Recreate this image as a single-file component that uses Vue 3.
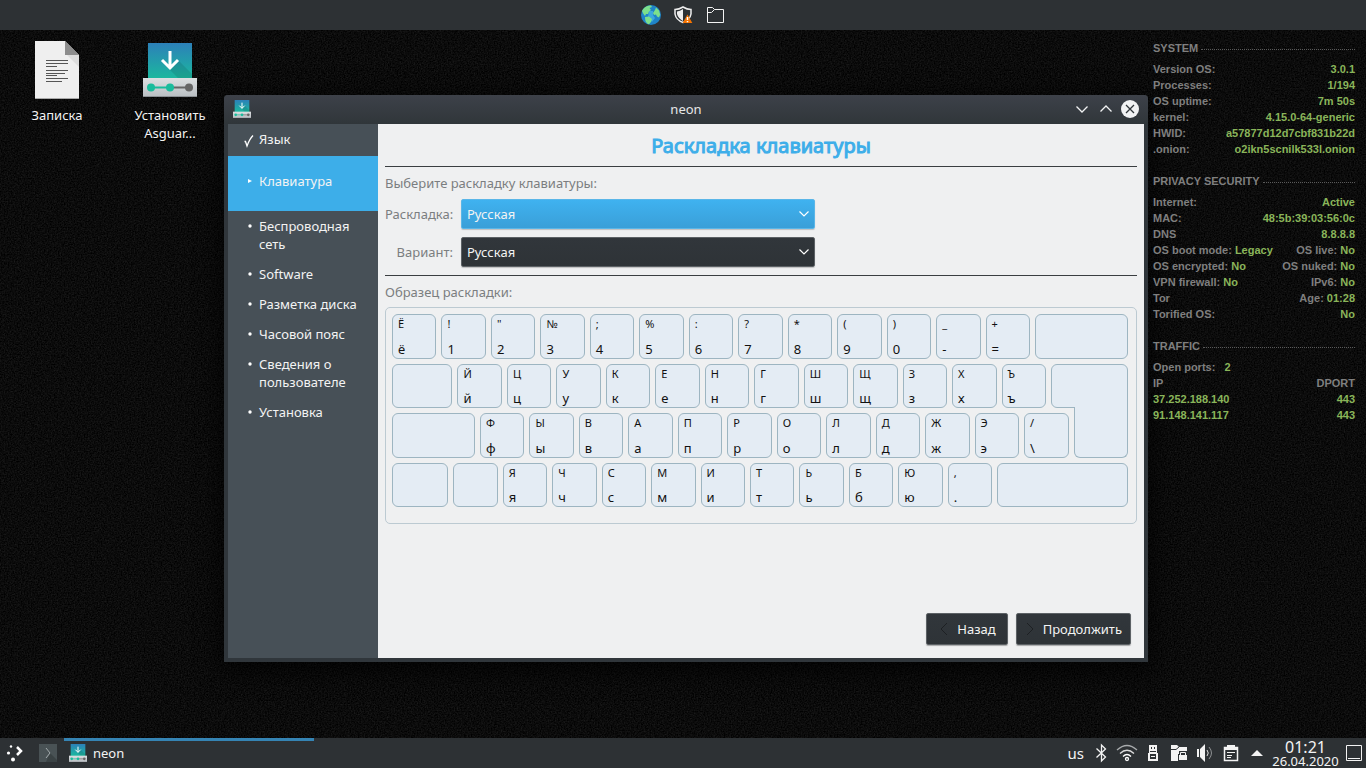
<script setup>
import { ref } from 'vue'

const layout = ref('Русская')
const variant = ref('Русская')

const steps = [
  { text: 'Язык', state: 'done' },
  { text: 'Клавиатура', state: 'current' },
  { text: 'Беспроводная сеть' },
  { text: 'Software' },
  { text: 'Разметка диска' },
  { text: 'Часовой пояс' },
  { text: 'Сведения о пользователе' },
  { text: 'Установка' },
]

const blank = (w, kind = '') => ({ w, kind })
const keys = (top, bottom) => [...top].map((t, i) => ({ w: 445, top: t, bottom: bottom[i] }))

const rows = [
  [...keys('Ё!"№;%:?*()_+', 'ё1234567890-='), blank(930)],
  [blank(605), ...keys('ЙЦУКЕНГШЩЗХЪ', 'йцукенгшщзхъ'), blank(770, 'enter-top')],
  [blank(830), ...keys('ФЫВАПРОЛДЖЭ/', 'фывапролджэ\\'), blank(545, 'enter-bottom')],
  [blank(565), blank(445), ...keys('ЯЧСМИТЬБЮ,', 'ячсмитьбю.'), blank(1310)],
]
const columns = (row) => row.map((k) => `minmax(0, ${k.w}fr)`).join(' ')

const sections = [
  {
    title: 'SYSTEM',
    rows: [
      [['Version OS:'], ['', '3.0.1']],
      [['Processes:'], ['', '1/194']],
      [['OS uptime:'], ['', '7m 50s']],
      [['kernel:'], ['', '4.15.0-64-generic']],
      [['HWID:'], ['', 'a57877d12d7cbf831b22d']],
      [['.onion:'], ['', 'o2ikn5scnilk533l.onion']],
    ],
  },
  {
    title: 'PRIVACY SECURITY',
    rows: [
      [['Internet:'], ['', 'Active']],
      [['MAC:'], ['', '48:5b:39:03:56:0c']],
      [['DNS'], ['', '8.8.8.8']],
      [['OS boot mode:', 'Legacy'], ['OS live:', 'No']],
      [['OS encrypted:', 'No'], ['OS nuked:', 'No']],
      [['VPN firewall:', 'No'], ['IPv6:', 'No']],
      [['Tor'], ['Age:', '01:28']],
      [['Torified OS:'], ['', 'No']],
    ],
  },
  {
    title: 'TRAFFIC',
    rows: [
      [['Open ports:', '\u00a0\u00a02'], ['']],
      [['IP'], ['DPORT']],
      [['', '37.252.188.140'], ['', '443']],
      [['', '91.148.141.117'], ['', '443']],
    ],
  },
]
</script>

<template>
  <div class="desktop">
    <svg class="grain" aria-hidden="true">
      <filter id="grain" x="0" y="0" width="100%" height="100%" color-interpolation-filters="sRGB">
        <feTurbulence type="fractalNoise" baseFrequency="0.7" numOctaves="2" seed="4" />
        <feColorMatrix values="0.16 0 0 0 -0.035  0.16 0 0 0 -0.035  0.16 0 0 0 -0.035  0 0 0 0 1" />
      </filter>
      <rect width="100%" height="100%" filter="url(#grain)" />
      <symbol id="installer" viewBox="0 0 54 54">
        <linearGradient id="teal" x1="0" y1="0" x2="0" y2="1">
          <stop offset="0" stop-color="#2c80b9" /><stop offset="1" stop-color="#1abc9c" />
        </linearGradient>
        <linearGradient id="plate" x1="0" y1="0" x2="0" y2="1">
          <stop offset="0" stop-color="#dcdfe1" /><stop offset="1" stop-color="#b9bec2" />
        </linearGradient>
        <path fill="url(#teal)" d="M5 0h44v38H5z" />
        <path fill="#000" opacity=".1" d="M27 27l9-9 13 13v4H35z" />
        <path fill="none" stroke="#fff" stroke-width="3" d="M27 8v17M19 17l8 8 8-8" />
        <path fill="url(#plate)" d="M0 35h54v19H0z" />
        <path fill="#8b9094" d="M0 53h54v1H0z" />
        <path stroke="#666" stroke-width="2" d="M27 44.500h18" />
        <path stroke="#1abc9c" stroke-width="2" d="M9 44.500h18" />
        <circle cx="8" cy="44.500" r="4" fill="#1abc9c" /><circle cx="27" cy="44.500" r="4" fill="#1abc9c" />
        <circle cx="46" cy="44.500" r="4" fill="#666" />
      </symbol>
    </svg>

    <header class="topbar">
      <button aria-label="Браузер">
        <svg width="20" height="20" viewBox="0 0 20 20">
          <circle cx="10" cy="10" r="10" fill="#1f84c8" />
          <path fill="#48b8e8" opacity=".7" d="M8 6l4 0 0 4 2 3-3 4-4-5z" />
          <path fill="#7ce08c" d="M1 6c2-4 5-5.500 9-5.500L11 2 8.500 3 10 5 8 6.500 7 9 5 9 4 11 2.500 9zM4 12l4-.5 3 2.500-1 3-2 2.300C5 18.500 4 15.500 4 12zM12 8l2-3 1-2.500 3 3 1.200 4-1.200 3-2-1-1-2-2 .5z" />
        </svg>
      </button>
      <button aria-label="Безопасность">
        <svg width="20" height="20" viewBox="0 0 20 20">
          <path fill="none" stroke="#eee" stroke-width="1.500" d="M2 4.500Q6 4.500 10 2q4 2.500 8 2.500V9q-1 6-8 8.500Q3 15 2 9z" />
          <path fill="#eee" d="M4 6.500Q7 6 10 4v12Q5 13 4 9z" />
          <path fill="#f67400" d="M14.500 9.500l4.800 8.500H9.700z" /><path stroke="#fff" stroke-width="1.500" d="M14.500 12v3m0 1v1.200" />
        </svg>
      </button>
      <button aria-label="Файлы">
        <svg width="20" height="20" viewBox="0 0 20 20">
          <path fill="none" stroke="#f3f3f3" d="M2.500 2.500h5l2 2h9v13h-16zM2.500 7.500h4l3-3" />
        </svg>
      </button>
    </header>

    <main class="workspace">
      <nav class="shortcuts">
        <button>
          <svg width="44" height="58" viewBox="0 0 44 58">
            <path fill="#efefef" d="M0 0h30l14 14v44H0z" /><path fill="#ddd" d="M32 14h12v12z" />
            <path fill="#8d8d8d" d="M30 0l14 14H30z" /><path fill="#aaa" d="M0 57h44v1H0z" />
            <path stroke="#555" d="M11 19.500h22M11 22.500h22M11 25.500h11M11 29.500h22M11 32.500h19M11 34.500h11M11 37.500h22M11 40.500h16" />
          </svg>
          <span>Записка</span>
        </button>
        <button>
          <svg class="inst" width="54" height="54"><use href="#installer" /></svg>
          <span>Установить Asguar...</span>
        </button>
      </nav>

      <section class="window" aria-label="neon">
        <header class="titlebar">
          <svg width="18" height="18"><use href="#installer" /></svg>
          <span class="caption">neon</span>
          <div class="controls">
            <button aria-label="Свернуть"><svg width="18" height="18" viewBox="0 0 18 18"><path d="M3.500 6.500L9 12l5.500-5.500" /></svg></button>
            <button aria-label="Развернуть"><svg width="18" height="18" viewBox="0 0 18 18"><path d="M3.500 11.500L9 6l5.500 5.500" /></svg></button>
            <button aria-label="Закрыть"><svg width="18" height="18" viewBox="0 0 18 18"><circle cx="9" cy="9" r="9" fill="#f1f2f3" /><path class="dark" d="M5 5l8 8M13 5l-8 8" /></svg></button>
          </div>
        </header>

        <div class="body">
          <ol class="steps">
            <li v-for="s in steps" :key="s.text" :class="s.state">
              <svg v-if="s.state === 'done'" class="mark" width="12" height="14" viewBox="0 0 12 14"><path fill="none" stroke="#fff" stroke-width="1.300" d="M1.500 7.500h1l1.500 4.500Q6.500 5 10 1.500" /></svg>
              <svg v-else-if="s.state === 'current'" class="mark" width="12" height="14" viewBox="0 0 12 14"><path fill="#fff" d="M5 5l4 2-4 2z" /></svg>
              <svg v-else class="mark" width="12" height="14" viewBox="0 0 12 14"><circle cx="7" cy="7" r="1.700" fill="#fff" /></svg>
              <span>{{ s.text }}</span>
            </li>
          </ol>

          <div class="page">
            <h1>Раскладка клавиатуры</h1>
            <div class="form">
              <p>Выберите раскладку клавиатуры:</p>
              <div class="fields">
                <label for="layout">Раскладка:</label>
                <div class="combo active">
                  <select id="layout" v-model="layout"><option>Русская</option></select>
                  <svg width="12" height="8" viewBox="0 0 12 8"><path d="M1.500 1.500L6 6l4.500-4.500" /></svg>
                </div>
                <label for="variant">Вариант:</label>
                <div class="combo">
                  <select id="variant" v-model="variant"><option>Русская</option></select>
                  <svg width="12" height="8" viewBox="0 0 12 8"><path d="M1.500 1.500L6 6l4.500-4.500" /></svg>
                </div>
              </div>
            </div>
            <p class="sample">Образец раскладки:</p>
            <div class="keyboard">
              <div v-for="(row, r) in rows" :key="r" class="row" :style="{ gridTemplateColumns: columns(row) }">
                <div v-for="(k, i) in row" :key="i" class="key" :class="k.kind">
                  <span class="up">{{ k.top }}</span><span>{{ k.bottom }}</span>
                </div>
              </div>
            </div>
            <footer class="actions">
              <button><svg width="10" height="14" viewBox="0 0 10 14"><path d="M8 1L2 7l6 6" /></svg>Назад</button>
              <button class="next"><svg width="10" height="14" viewBox="0 0 10 14"><path d="M2 1l6 6-6 6" /></svg>Продолжить</button>
            </footer>
          </div>
        </div>
      </section>

      <aside class="monitor">
        <section v-for="s in sections" :key="s.title">
          <h2>{{ s.title }}</h2>
          <div v-for="(line, i) in s.rows" :key="i" class="stat">
            <span v-for="(part, j) in line" :key="j">{{ part[0] }} <b v-if="part[1]">{{ part[1] }}</b></span>
          </div>
        </section>
      </aside>
    </main>

    <footer class="taskbar">
      <button class="launcher" aria-label="Меню">
        <svg width="18" height="18" viewBox="0 0 18 18">
          <g fill="#fff"><circle cx="5" cy="2.500" r="1.200" /><circle cx="2.500" cy="9" r="1.600" /><circle cx="7" cy="15.500" r="2" /></g>
          <path fill="none" stroke="#fff" stroke-width="2.500" d="M11 3l4 4-4 4" />
        </svg>
      </button>
      <button class="konsole" aria-label="Терминал">
        <svg width="18" height="18" viewBox="0 0 18 18"><path fill="#495255" d="M0 0h18v18H0z" /><path fill="#3a4244" d="M11 9l7 7v2H7z" /><path fill="none" stroke="#a3abad" d="M7 4l4 5-4 5" /></svg>
      </button>
      <button class="task">
        <svg width="18" height="18"><use href="#installer" /></svg>neon
      </button>
      <div class="tray">
        <span class="lang">us</span>
        <svg viewBox="0 0 22 22"><path class="line" stroke-width="1.300" d="M6.500 6.500l9 8.500-4 4V3l4 4-9 8.500" /></svg>
        <svg viewBox="0 0 22 22">
          <g fill="none" stroke="#a8abad" stroke-width="1.300"><path d="M1 8Q11-1 21 8" /><path stroke="#ddd" d="M4 11.500q7-6.500 14 0" /><path stroke="#fff" d="M7 14.500q4-4 8 0" /><circle cx="11" cy="17" r="1.500" stroke="#fff" /></g>
        </svg>
        <svg viewBox="0 0 22 22"><path fill="#f3f3f3" fill-rule="evenodd" d="M7 3h8v8h1v8H6v-8h1zM9 5v2h1V5zm3 0v2h1V5zM8 9v1h6V9zM8 12v5h6v-5zM9 14h4v1H9z" /></svg>
        <svg viewBox="0 0 22 22"><path fill="#f3f3f3" d="M3 3h6l2 2h8v14H3z" /><path stroke="#2d3134" d="M3 7.500h5l3-2.500" fill="none" /><path fill="#2d3134" d="M10 12h1V9h8v3h1v7H10z" /><path fill="none" stroke="#f3f3f3" d="M12.500 13v-2.500h5V13" /><path fill="#f3f3f3" d="M11 13h8v5h-8z" /></svg>
        <svg viewBox="0 0 22 22"><path fill="#f3f3f3" d="M3 7h2v8H3zM6 7l5-5v18l-5-5z" /><path fill="none" stroke="#ddd" d="M13 8q2.500 3 0 6" /><path fill="none" stroke="#8d9092" d="M15 5q5 6 0 12" /></svg>
        <svg viewBox="0 0 22 22"><path class="line" stroke-width="1.500" d="M4.500 5.500h13v13h-13z" /><path fill="#f3f3f3" d="M7 3h8v5H4V5h3zM15 5h3v3h-3z" /><path class="line" d="M7 10.500h8M7 13.500h5M7 15.500h4" /></svg>
        <svg viewBox="0 0 22 22"><path fill="#f3f3f3" d="M5 14l6-6 6 6z" /></svg>
        <div class="clock"><time>01:21</time><time class="date">26.04.2020</time></div>
        <svg viewBox="0 0 22 22"><path class="line" d="M3.500 3.500h15v15h-15zM5 16.500h12" /></svg>
      </div>
    </footer>
  </div>
</template>

<style>
body { background: #0b0b0b; }
</style>

<style scoped>
* { box-sizing: border-box; margin: 0; }
.desktop {
  position: relative;
  display: flex;
  flex-direction: column;
  min-height: 100vh;
  overflow: hidden;
  font: 13px/18px "Noto Sans", sans-serif;
  color: #f3f3f3;
}
svg { display: block; flex: none; }
button {
  padding: 0;
  border: 0;
  background: none;
  color: inherit;
  font: inherit;
}
.grain { position: absolute; inset: 0; width: 100%; height: 100%; }
.topbar, .workspace, .taskbar { position: relative; }
.topbar {
  display: flex;
  align-items: center;
  justify-content: center;
  gap: 12px;
  height: 30px;
  background: #2d3134;
}
.workspace {
  display: grid;
  grid-template-columns: 224px minmax(0, 1fr) 218px;
  flex: 1;
}
.shortcuts { display: flex; align-items: flex-start; gap: 1px; padding: 11px 0 0 1px; }
.shortcuts button {
  display: flex;
  flex: none;
  flex-direction: column;
  align-items: center;
  gap: 7px;
  width: 112px;
  padding: 0 12px;
  text-shadow: 0 1px 2px #000;
}
.shortcuts svg { height: 58px; }
.shortcuts .inst { padding: 2px 0; }

.window {
  display: flex;
  flex-direction: column;
  margin: 65px 0 76px;
  border-radius: 4px 4px 0 0;
  background: #30363b;
  box-shadow: 0 6px 24px 4px rgba(0, 0, 0, 0.7);
}
.titlebar {
  display: grid;
  grid-template-columns: 66px 1fr 66px;
  align-items: center;
  height: 29px;
  padding: 0 9px 2px;
  border-radius: 4px 4px 0 0;
  background: linear-gradient(#3d4149, #30363a);
  color: #e6e7e8;
}
.caption { text-align: center; }
.controls { display: flex; justify-content: flex-end; gap: 6px; }
.controls path { fill: none; stroke: #f1f2f3; stroke-width: 1.3; }
.controls .dark { stroke: #30363a; }
.body {
  display: flex;
  flex: 1;
  margin: 0 4px 4px;
}
.steps {
  width: 150px;
  padding: 0;
  background: #475057;
  list-style: none;
}
.steps li { display: flex; gap: 4px; padding: 6px 16px 6px 15px; }
.steps .done { padding-bottom: 8px; }
.steps .current { padding-top: 16px; padding-bottom: 21px; background: #3daee9; }
.mark { margin-top: 2px; }
.done .mark { margin-top: 4px; }
.page {
  display: flex;
  flex: 1;
  flex-direction: column;
  padding: 0 7px 13px;
  background: #eff0f1;
  color: #7b7e80;
}
h1 {
  height: 42px;
  font-size: 20px;
  font-weight: 400;
  line-height: 44px;
  text-align: center;
  color: #3daee9;
  -webkit-text-stroke: 1px #3daee9;
}
.form {
  padding: 7px 0 8px;
  border: solid #3a3e41;
  border-width: 1px 0;
}
.fields {
  display: grid;
  grid-template-columns: 68px 354px;
  align-items: center;
  gap: 8px;
  margin-top: 7px;
}
.fields label { text-align: right; }
.combo { position: relative; }
.combo select {
  display: block;
  appearance: none;
  width: 100%;
  height: 30px;
  padding: 0 5px;
  border: 1px solid #5c6165;
  border-radius: 2px;
  background: linear-gradient(#31363b, #2e3337);
  box-shadow: 0 1px 1px rgba(0, 0, 0, 0.2);
  color: #f3f3f3;
  font: inherit;
}
.combo.active select {
  border-color: #5ab6e8;
  background: linear-gradient(#3fb2f0, #3a9fd8);
}
.combo svg { position: absolute; top: 11px; right: 5px; pointer-events: none; }
.combo path { fill: none; stroke: #fff; stroke-width: 1.2; }
.sample { margin: 7px 0 6px; }
.keyboard {
  display: flex;
  flex-direction: column;
  gap: 5px;
  height: 217px;
  padding: 6px 8px 16px 6px;
  border: 1px solid #bccad2;
  border-radius: 5px;
}
.row { display: grid; flex: 1; gap: 5px; }
.key {
  display: flex;
  flex-direction: column;
  justify-content: space-between;
  padding: 1px 5px;
  border: 1px solid #9db5c1;
  border-radius: 6px;
  background: #e4ecf4;
  color: #111;
  line-height: 16px;
}
.up { font-size: 11px; }
.enter-top { border-bottom-left-radius: 6px; border-bottom-right-radius: 0; }
.enter-bottom { position: relative; border-top: 0; border-radius: 0 0 6px 6px; }
.enter-bottom::before {
  content: "";
  position: absolute;
  right: -1px;
  bottom: 100%;
  left: -1px;
  height: 6px;
  border: solid #9db5c1;
  border-width: 0 1px;
  background: #e4ecf4;
}
.actions {
  display: flex;
  justify-content: flex-end;
  gap: 8px;
  margin-top: auto;
  padding-right: 6px;
}
.actions button {
  display: flex;
  align-items: center;
  gap: 8px;
  height: 32px;
  padding: 0 11px 0 12px;
  border: 1px solid #5c6165;
  border-radius: 2px;
  background: linear-gradient(#31363b, #2e3337);
  box-shadow: 0 1px 1px rgba(0, 0, 0, 0.3);
  color: #f3f3f3;
}
.actions .next { padding: 0 8px 0 8px; }
.actions path { fill: none; stroke: #1d2023; }

.monitor {
  padding: 10px 11px 0 5px;
  color: #7f7f7f;
  font: bold 11px/16px "Liberation Sans Narrow", "Liberation Sans", sans-serif;
}
.monitor section { margin-bottom: 16px; }
.monitor b { color: #8ab55a; }
h2 {
  display: flex;
  align-items: center;
  gap: 3px;
  margin-bottom: 5px;
  font: inherit;
}
h2::after { content: ""; flex: 1; margin-top: 3px; border-top: 1px dotted #5a5a5a; }
.stat { display: flex; justify-content: space-between; white-space: nowrap; }

.taskbar {
  display: flex;
  align-items: center;
  height: 30px;
  padding: 0 1px 0 6px;
  background: #2d3134;
}
.konsole { margin: 0 7px 0 15px; }
.task {
  display: flex;
  align-items: center;
  gap: 6px;
  width: 250px;
  height: 30px;
  padding: 0 5px;
  border-top: 3px solid #3584b4;
  border-bottom: 3px solid transparent;
}
.tray { display: flex; align-items: center; gap: 4px; margin-left: auto; }
.tray svg { width: 22px; height: 22px; }
.tray .line { fill: none; stroke: #f3f3f3; }
.lang { margin-right: 2px; font-size: 15px; }
.clock {
  display: flex;
  flex-direction: column;
  width: 67px;
  align-items: center;
  font-size: 16px;
  line-height: 16px;
}
.date { font-size: 13px; line-height: 13px; }
</style>
